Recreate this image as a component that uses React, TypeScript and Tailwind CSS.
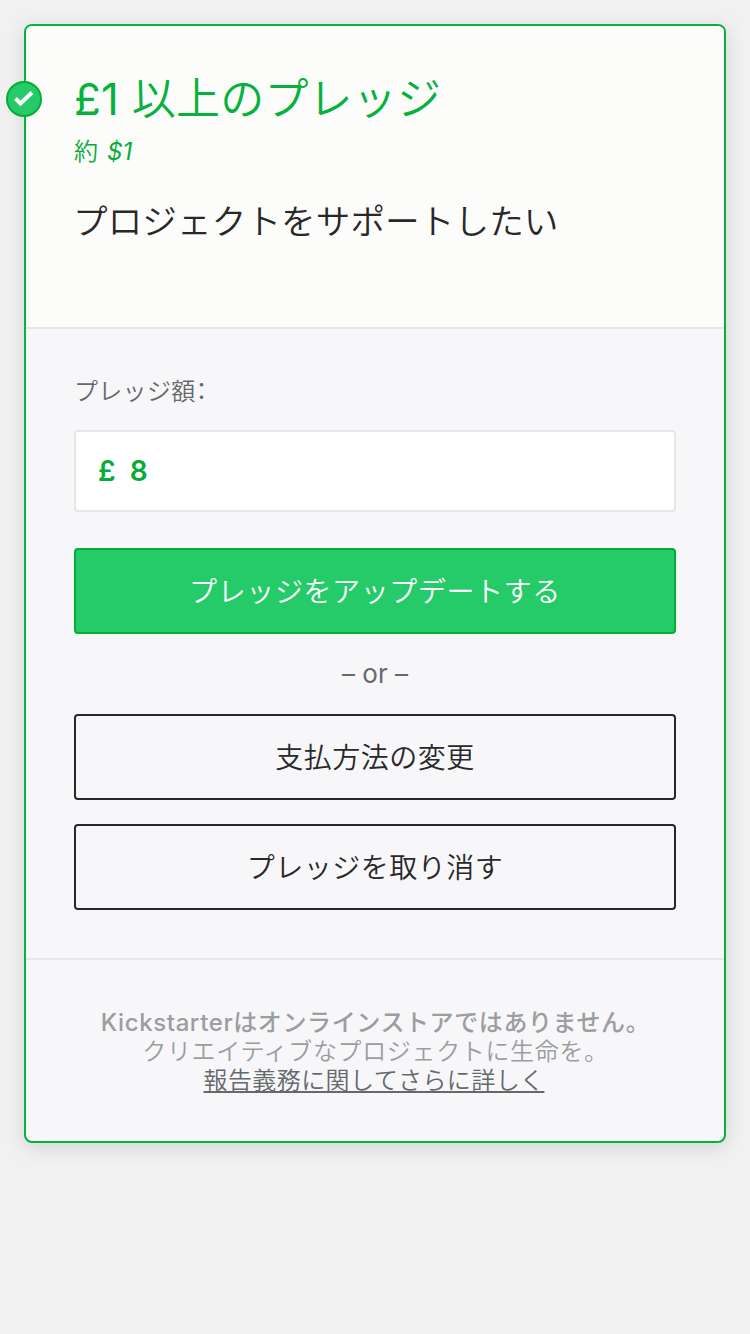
export default function App() {
  return (
    <main className="h-[1334px] w-[750px] overflow-hidden bg-[#f1f1f1] p-6 font-['Inter','Noto_Sans_CJK_JP',sans-serif] text-[#282828]">
      <section className="relative h-[1119px] w-[702px] rounded-lg border-2 border-[#05b23c] bg-[#f7f7fa] shadow-[0_4px_20px_rgba(0,0,0,0.13)]">
        <div className="absolute -left-5 top-[55px] flex size-9 items-center justify-center rounded-full border-2 border-[#05ad38] bg-[#25cb68]">
          <svg viewBox="0 0 20 16" className="h-4 w-5" fill="none" stroke="white" strokeWidth="4"><path d="M1.5 7.5l5 5L18 1.5" /></svg>
        </div>
        <header className="h-[303px] rounded-t-md border-b-2 border-[#e6e6e6] bg-[#fcfcfa] px-12 pt-[41px]">
          <h1 className="whitespace-nowrap text-[44px] font-normal leading-[64px] text-[#05b23c]">£1<span className="ml-[13px] font-[350] tracking-[0.2px]">以上のプレッジ</span></h1>
          <p className="mt-[3px] text-[24px] font-[350] leading-[36px] text-[#05ad38]">約<i className="ml-[9px] font-normal">$1</i></p>
          <h2 className="-ml-px mt-[26px] whitespace-nowrap text-[34.6px] font-[350] leading-[50px] tracking-[0.1px]">プロジェクトをサポートしたい</h2>
        </header>
        <div className="h-[631px] border-b-2 border-[#e6e6e6] px-12 pt-[45px]">
          <label className="block text-[24px] font-[350] leading-[36px] tracking-[0.3px] text-[#656969]">プレッジ額<span className="[font-feature-settings:'halt']">：</span></label>
          <div className="mt-[20px] flex h-[82px] items-center gap-[14px] rounded border-2 border-[#e6e6e6] bg-white px-[22px] text-[28px] font-semibold text-[#05ad38]"><span>£</span><span>8</span></div>
          <button className="mt-9 block h-[86px] w-full rounded border-2 border-[#05ad38] bg-[#25cb68] pt-px text-[28px] font-[350] tracking-[0.6px] text-white">プレッジをアップデートする</button>
          <p className="mt-[20px] text-center text-[26px] font-normal leading-[40px] text-[#656969]">– or –</p>
          <button className="mt-[20px] block h-[86px] w-full rounded border-2 border-[#282828] pt-[2px] text-[28px] font-[350] tracking-[0.5px]">支払方法の変更</button>
          <button className="mt-6 block h-[86px] w-full rounded border-2 border-[#282828] pt-[2px] text-[28px] font-[350] tracking-[0.5px]">プレッジを取り消す</button>
        </div>
        <footer className="whitespace-nowrap pt-[48px] text-center text-[24px] leading-[29px] text-[#9b9e9e]">
          <p className="pl-px font-medium tracking-[0.6px]">Kickstarterはオンラインストアではありません。</p>
          <p className="pl-px font-[350] tracking-[0.65px]">クリエイティブなプロジェクトに生命を。</p>
          <p className="pr-[2px]"><a className="font-[350] tracking-[0.4px] text-[#656969] underline decoration-2 underline-offset-[2px] [text-decoration-skip-ink:none]">報告義務に関してさらに詳しく</a></p>
        </footer>
      </section>
    </main>
  );
}
